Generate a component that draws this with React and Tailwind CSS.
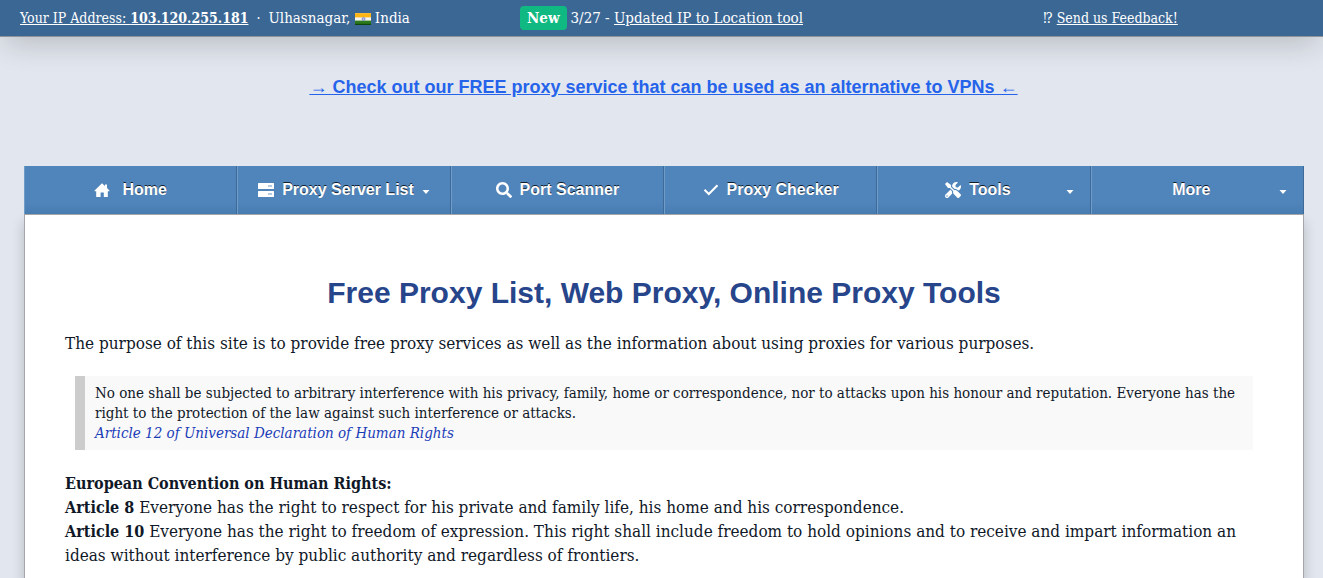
import { FaSearch, FaTools } from "react-icons/fa";

function HomeIcon() {
  return (
    <svg viewBox="0 0 16 16" className="size-4 fill-current" aria-hidden="true">
      <path d="M8 1.2 L11 4 V2.6 H13 V6 L15.4 8.6 V9.2 H13.8 V15 H9.8 V10.6 H6.6 V15 H2.2 V9.2 H.6 V8.6 Z" />
    </svg>
  );
}

function ServerIcon() {
  return (
    <svg viewBox="0 0 16 16" className="size-4 fill-current" aria-hidden="true">
      <rect x="0" y="1" width="16" height="6" rx=".5" />
      <rect x="0" y="9" width="16" height="6" rx=".5" />
      <rect x="10" y="3" width="4" height="2" fill="#b4cbe2" />
      <rect x="10" y="11" width="4" height="2" fill="#b4cbe2" />
    </svg>
  );
}

function CheckIcon() {
  return (
    <svg viewBox="0 0 16 16" className="size-4 fill-none stroke-current" aria-hidden="true">
      <path d="M1.5 7.8 L5.8 12 L14.5 3.2" strokeWidth="2" />
    </svg>
  );
}

function IndiaFlag() {
  return (
    <svg viewBox="0 0 15 11" className="inline-block w-4 h-3 align-[-2px]" role="img" aria-label="Flag of India">
      <rect width="15" height="11" fill="#f3f3f3" />
      <rect width="15" height="4" fill="#fbb616" />
      <rect y="7" width="15" height="4" fill="#2c7a1c" />
      <rect y="10" width="15" height="1" fill="#0b3d05" />
      <circle cx="8" cy="5.5" r="1.4" fill="#b6bde6" stroke="#7b86c4" strokeWidth=".8" />
    </svg>
  );
}

function Caret() {
  return (
    <svg viewBox="0 0 8 4" className="w-2 h-1 mt-1 fill-current" aria-hidden="true">
      <path d="M.5 0 H7.5 L4 4 Z" />
    </svg>
  );
}

const items = [
  { label: "Home", icon: <HomeIcon />, gap: "gap-3" },
  { label: "Proxy Server List", icon: <ServerIcon />, gap: "gap-2", menu: "inline" },
  { label: "Port Scanner", icon: <FaSearch className="size-4" />, gap: "gap-2" },
  { label: "Proxy Checker", icon: <CheckIcon />, gap: "gap-2" },
  { label: "Tools", icon: <FaTools className="size-4" />, gap: "gap-2", menu: "edge" },
  { label: "More", gap: "gap-2", menu: "edge" },
];

function NavItem({ item }) {
  return (
    <li className="flex-1 border-l border-r border-l-[#6f9dc8] border-r-[#3d6a98]">
      <a
        href="#"
        className="relative flex h-full items-center justify-center pb-px font-bold text-white [text-shadow:0_-1px_0_rgba(0,0,0,0.8)]"
      >
        <span className={"flex items-center " + item.gap + (item.menu == "edge" ? " pr-3" : "")}>
          {item.icon}
          {item.label}
          {item.menu == "inline" && <Caret />}
        </span>
        {item.menu == "edge" && (
          <span className="absolute right-4">
            <Caret />
          </span>
        )}
      </a>
    </li>
  );
}

export default function App() {
  return (
    <div className="flex min-h-screen flex-col overflow-hidden bg-[#e2e6ee] text-gray-900 [font-family:'DejaVu_Serif_Condensed','DejaVu_Serif',serif]">
      <header className="grid h-[37px] grid-cols-3 items-center gap-16 whitespace-nowrap border-b border-[#8f949a] bg-[#3b6795] px-5 text-sm text-white shadow-[0_10px_30px_-4px_rgba(0,0,0,0.2)]">
        <div className="flex items-baseline">
          <a href="#" className="underline">
            Your IP Address: <b>103.120.255.181</b>
          </a>
          <span className="mx-2">·</span>
          <span className="text-[15px] leading-5">
            Ulhasnagar, <IndiaFlag /> India
          </span>
        </div>
        <div className="flex items-center justify-center text-[15px] leading-5">
          <b className="mr-1 rounded bg-[#10b981] px-[7px] py-0.5">New</b>
          <span>
            3/27 -{" "}
            <a href="#" className="underline">
              Updated IP to Location tool
            </a>
          </span>
        </div>
        <div className="text-center">
          ⁉{" "}
          <a href="#" className="underline">
            Send us Feedback!
          </a>
        </div>
      </header>

      <div className="flex h-[129px] justify-center pt-9 pl-1 [font-family:'Liberation_Sans',Arial,sans-serif]">
        <a href="#" className="text-lg font-bold text-[#2563eb] underline">
          → Check out our FREE proxy service that can be used as an alternative to VPNs ←
        </a>
      </div>

      <div className="flex flex-1 flex-col pl-6 pr-[19px]">
        <nav className="relative">
          <ul className="flex h-12 bg-linear-to-b from-[#5085bb] from-75% to-[#487cb1] text-base [font-family:'Liberation_Sans',Arial,sans-serif]">
            {items.map((item) => (
              <NavItem key={item.label} item={item} />
            ))}
          </ul>
        </nav>

        <main className="flex-1 border border-b-0 border-[#a3a5a8] bg-white px-10 pt-14 shadow-[0_8px_12px_rgba(0,0,0,0.2)]">
          <h1 className="mb-4 text-center text-[30px] leading-11 font-bold text-[#27458b] [font-family:'Liberation_Sans',Arial,sans-serif]">
            Free Proxy List, Web Proxy, Online Proxy Tools
          </h1>
          <p className="text-[17px] leading-6">
            The purpose of this site is to provide free proxy services as well as the information
            about using proxies for various purposes.
          </p>
          <blockquote className="my-[21px] mx-2.5 border-l-10 border-[#ccc] bg-[#f9f9f9] px-2.5 py-[7px] text-[15px] leading-5">
            No one shall be subjected to arbitrary interference with his privacy, family, home or
            correspondence, nor to attacks upon his honour and reputation. Everyone has the
            <br />
            right to the protection of the law against such interference or attacks.
            <br />
            <cite className="text-blue-800">Article 12 of Universal Declaration of Human Rights</cite>
          </blockquote>
          <p className="text-[17px] leading-6">
            <b className="text-base/5">European Convention on Human Rights:</b>
            <br />
            <b className="text-base/5">Article 8</b> Everyone has the right to respect for his
            private and family life, his home and his correspondence.
            <br />
            <b className="text-base/5">Article 10</b> Everyone has the right to freedom of
            expression. This right shall include freedom to hold opinions and to receive and impart
            information an
            <br />
            ideas without interference by public authority and regardless of frontiers.
          </p>
        </main>
      </div>
    </div>
  );
}
